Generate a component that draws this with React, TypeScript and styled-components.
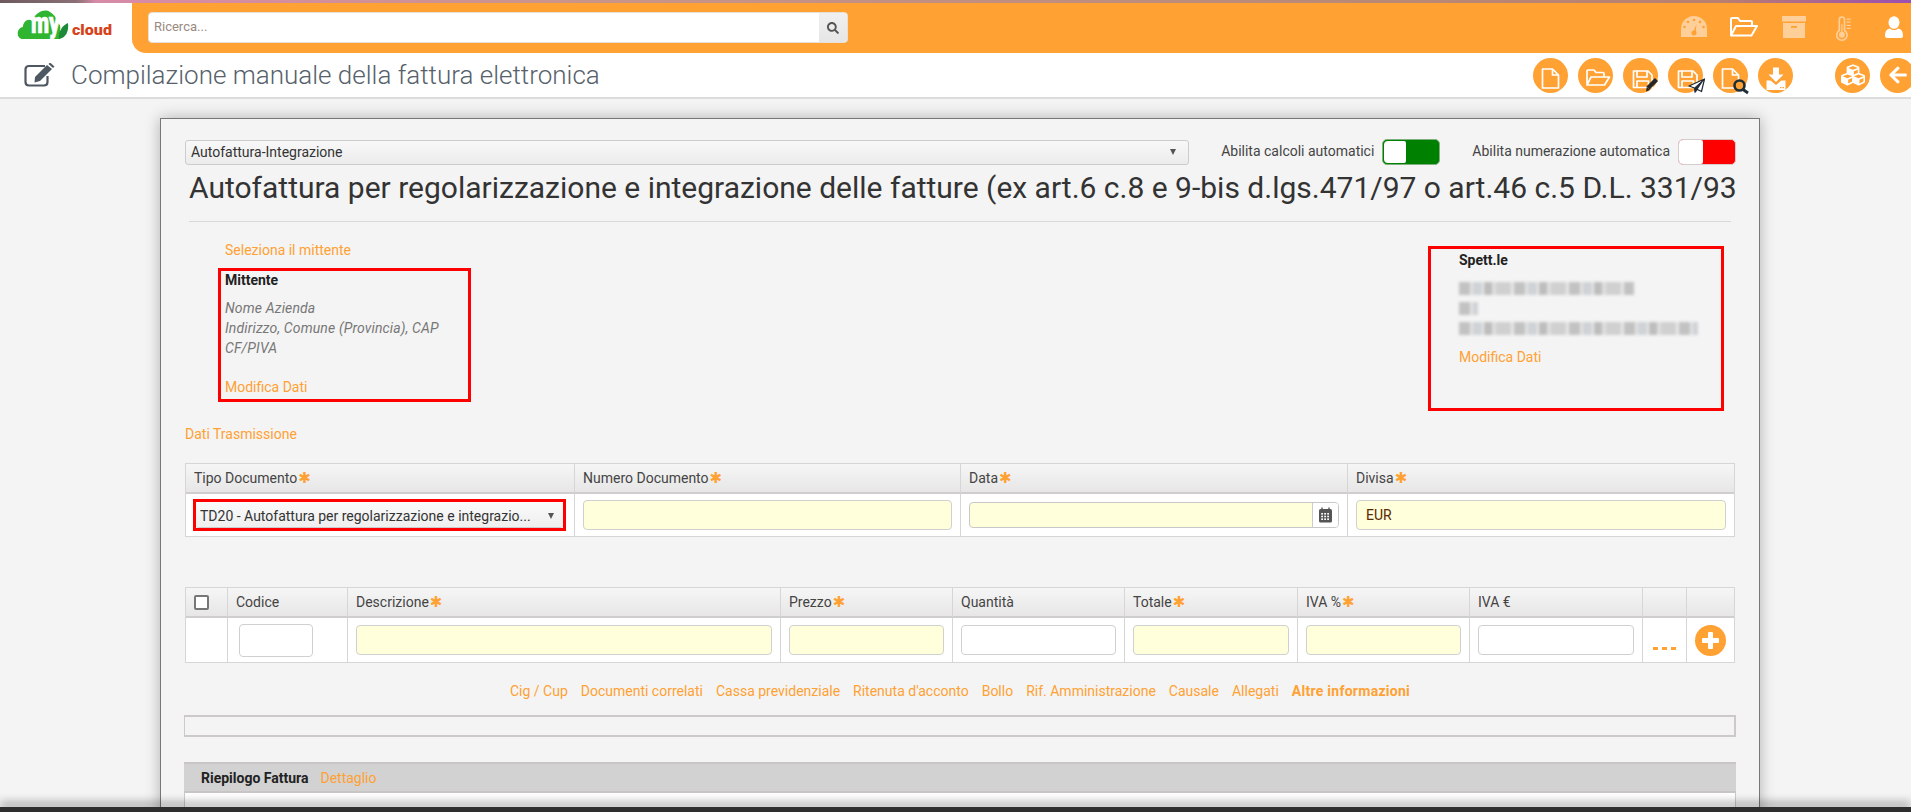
import React from "react";
import styled, { createGlobalStyle } from "styled-components";
import { FaCubes, FaArrowLeft, FaSearch } from "react-icons/fa";

const ORANGE = "#ffa133";

const Global = createGlobalStyle`
  html, body { margin: 0; padding: 0; background: #f4f4f4; }
  body { font-family: Roboto, "Liberation Sans", sans-serif; font-size: 14px; color: #333; overflow: hidden; }
  * { box-sizing: border-box; }
`;

const Page = styled.div`
  height: 812px;
  overflow: hidden;
  background: #f4f4f4;
`;
const TopLine = styled.div`
  height: 3px;
  background: linear-gradient(90deg, #6d5a5e 0, #8a7075 4%, #d88aa8 5%, #c9958a 30%, #b98a78 70%, #b9806f 90%, #9b4fb0 100%);
`;
const Header = styled.header`
  display: flex;
  height: 50px;
  background: #fff;
`;
const LogoCell = styled.div`
  width: 132px;
  flex: none;
  padding: 7px 0 0 17px;
  svg { overflow: visible; }
`;
const HeaderBar = styled.div`
  flex: 1;
  display: flex;
  align-items: flex-start;
  background: ${ORANGE};
  border-bottom-left-radius: 14px;
  padding: 9px 2px 0 16px;
`;
const Search = styled.div`
  width: 700px;
  height: 31px;
  display: flex;
  background: #fff;
  border: 1px solid #e8e0d6;
  border-radius: 4px;
  overflow: hidden;
`;
const SearchText = styled.div`
  flex: 1;
  padding-left: 5px;
  line-height: 28px;
  font-size: 13px;
  color: #9a8a80;
`;
const SearchBtn = styled.div`
  width: 28px;
  display: flex;
  align-items: center;
  justify-content: center;
  background: linear-gradient(#f0f0f0, #e6e6e6);
  color: #555;
  font-size: 12px;
`;
const HeaderIcons = styled.div`
  margin-left: auto;
  display: flex;
  gap: 20px;
  padding-top: 4px;
`;
const HeaderIconBox = styled.div`
  width: 30px;
  height: 26px;
  display: flex;
  justify-content: center;
`;
const TitleRow = styled.div`
  height: 46px;
  display: flex;
  align-items: center;
  background: #fff;
  border-bottom: 2px solid #dcdcdc;
  padding-left: 24px;
`;
const PageTitle = styled.div`
  margin-left: 16px;
  font-size: 26px;
  font-weight: 300;
  color: #56616b;
  white-space: nowrap;
`;
const Toolbar = styled.div`
  margin-left: auto;
  margin-right: -4px;
  display: flex;
  align-items: center;
  gap: 10px;
`;
const RoundBtn = styled.div<{ $gap?: boolean }>`
  width: 35px;
  height: 35px;
  flex: none;
  border-radius: 50%;
  background: ${ORANGE};
  color: #fff;
  display: flex;
  align-items: center;
  justify-content: center;
  margin-left: ${(p) => (p.$gap ? "32px" : "0")};
  svg { overflow: visible; }
`;
const Card = styled.main`
  margin: 19px 0 0 160px;
  width: 1600px;
  height: 760px;
  padding: 20px 24px;
  background: #f4f4f4;
  border: 1px solid #777;
  box-shadow: 0 0 14px rgba(0, 0, 0, 0.28);
`;
const TopControls = styled.div`
  display: flex;
  align-items: center;
  height: 26px;
  margin-right: -1px;
`;
const Select = styled.div<{ $w?: number }>`
  height: 25px;
  width: ${(p) => (p.$w ? p.$w + "px" : "100%")};
  display: flex;
  align-items: center;
  justify-content: space-between;
  padding: 0 12px 0 5px;
  border: 1px solid #ccc;
  border-radius: 3px;
  background: linear-gradient(#f8f8f8, #ececec);
  font-size: 14px;
  color: #333;
`;
const Caret = styled.span`
  width: 0;
  height: 0;
  border-left: 3.5px solid transparent;
  border-right: 3.5px solid transparent;
  border-top: 6px solid #555;
`;
const ToggleLabel = styled.span<{ $first?: boolean }>`
  margin-left: ${(p) => (p.$first ? "auto" : "32px")};
  margin-right: 8px;
  font-size: 14px;
  color: #444;
  white-space: nowrap;
  position: relative;
  top: -1px;
`;
const Toggle = styled.div<{ $color: string; $knob: number; $inset: number; $edge: string }>`
  width: 58px;
  height: 26px;
  flex: none;
  padding: ${(p) => p.$inset}px;
  border-radius: 5px;
  background: ${(p) => p.$color};
  border: 1px solid ${(p) => p.$edge};
  display: flex;
  &::before {
    content: "";
    width: ${(p) => p.$knob}px;
    background: #fff;
    border-radius: 4px 2px 2px 4px;
  }
`;
const BigTitle = styled.h1`
  margin: 2px 0 0;
  padding: 0 0 0 4px;
  height: 42px;
  font-size: 30px;
  font-weight: 400;
  line-height: 42px;
  color: #333;
  white-space: nowrap;
`;
const Rule = styled.div`
  height: 1px;
  margin: 12px 4px 0 4px;
  background: #d9d9d9;
`;
const Parties = styled.div`
  display: flex;
  justify-content: space-between;
  align-items: flex-start;
  padding: 18px 11px 0 33px;
`;
const LinkText = styled.div`
  color: ${ORANGE};
  font-size: 14px;
  line-height: 20px;
`;
const SenderLink = styled(LinkText)`
  margin: 0 0 8px 7px;
`;
const RedBox = styled.section<{ $w: number; $h: number; $pl: number; $pt: number }>`
  width: ${(p) => p.$w}px;
  height: ${(p) => p.$h}px;
  border: 3px solid #f00;
  padding: ${(p) => p.$pt}px 0 0 ${(p) => p.$pl}px;
`;
const RecipientBox = styled(RedBox)`
  margin-top: 6px;
`;
const PartyHead = styled.div`
  font-weight: 700;
  font-size: 14px;
  line-height: 18px;
  color: #222;
`;
const PartyLines = styled.div`
  margin-top: 9px;
`;
const PlaceholderLine = styled.div`
  font-style: italic;
  font-size: 14px;
  line-height: 20px;
  letter-spacing: 0.14px;
  color: #777;
`;
const BlurRow = styled.div`
  height: 20px;
  display: flex;
  align-items: center;
`;
const BlurBar = styled.div<{ $w: number }>`
  width: ${(p) => p.$w}px;
  height: 13px;
  filter: blur(1.8px);
  background: repeating-linear-gradient(90deg, #c2c2c2 0 11px, #e2e2e2 11px 14px, #cfd2d6 14px 23px, #ececec 23px 25px, #bdbdbd 25px 33px, #dedede 33px 37px, #d0d0d0 37px 52px, #e8e8e8 52px 55px);
`;
const AfterGap = styled(LinkText)<{ $mt: number }>`
  margin-top: ${(p) => p.$mt}px;
`;
const SectionLink = styled(LinkText)`
  margin-top: 13px;
`;
const Grid = styled.div<{ $cols: string; $mt: number; $row: number }>`
  display: grid;
  grid-template-columns: ${(p) => p.$cols};
  grid-template-rows: 30px ${(p) => p.$row}px;
  margin-top: ${(p) => p.$mt}px;
  border: 1px solid #d6d6d6;
`;
const HeadCell = styled.div`
  display: flex;
  align-items: center;
  padding-left: 8px;
  font-size: 14px;
  color: #444;
  background: linear-gradient(#f6f6f6, #e8e6e6);
  border-bottom: 2px solid #cfcdcd;
  border-left: 1px solid #d6d6d6;
  &:first-child { border-left: 0; }
`;
const Star = styled.span`
  margin-left: 1px;
  font-family: "DejaVu Sans", sans-serif;
  font-size: 15px;
  line-height: 1;
  color: ${ORANGE};
`;
const BodyCell = styled.div`
  display: flex;
  align-items: center;
  padding: 0 8px;
  background: #fff;
  border-left: 1px solid #d6d6d6;
`;
const FirstBodyCell = styled(BodyCell)`
  border-left: 0;
`;
const CenterCell = styled(BodyCell)`
  justify-content: center;
  padding: 0;
`;
const Input = styled.div<{ $req?: boolean; $w?: number; $h?: number; $ml?: number }>`
  width: ${(p) => (p.$w ? p.$w + "px" : "100%")};
  height: ${(p) => p.$h ?? 30}px;
  margin-left: ${(p) => p.$ml ?? 0}px;
  padding-left: 9px;
  line-height: 28px;
  font-size: 14px;
  color: #5a2a00;
  background: ${(p) => (p.$req ? "#ffffdc" : "#fff")};
  border: 1px solid #d0d0d0;
  border-radius: 4px;
`;
const DateField = styled.div`
  width: 100%;
  height: 26px;
  display: flex;
  background: #ffffdc;
  border: 1px solid #c8c8c8;
  border-radius: 4px;
  overflow: hidden;
`;
const DateSpacer = styled.div`
  flex: 1;
`;
const DateBtn = styled.div`
  width: 26px;
  display: flex;
  align-items: center;
  justify-content: center;
  background: #fff;
  border-left: 1px solid #ccc;
`;
const RedSelectWrap = styled.div`
  width: 377px;
  height: 32px;
  margin-left: -1px;
  border: 3px solid #f00;
`;
const SmallSelect = styled(Select)`
  height: 26px;
  border-top: 0;
  border-left: 0;
  border-right: 0;
  padding: 3px 9px 0 4px;
  background: linear-gradient(#fafafa, #efefef);
`;
const Checkbox = styled.div`
  width: 15px;
  height: 15px;
  background: #fff;
  border: 2px solid #777;
  border-radius: 2px;
`;
const Dots = styled.div`
  display: flex;
  gap: 4px;
  margin-top: 16px;
`;
const Dot = styled.span`
  width: 5px;
  height: 3px;
  background: ${ORANGE};
`;
const PlusBtn = styled.div`
  width: 31px;
  height: 31px;
  border-radius: 50%;
  background: ${ORANGE};
  position: relative;
  &::before, &::after {
    content: "";
    position: absolute;
    background: #fff;
    border-radius: 1px;
  }
  &::before { left: 7px; right: 7px; top: 13px; height: 5px; }
  &::after { top: 7px; bottom: 7px; left: 13px; width: 5px; }
`;
const Tabs = styled.nav`
  display: flex;
  justify-content: center;
  gap: 13px;
  margin-top: 18px;
  height: 20px;
`;
const Tab = styled(LinkText)<{ $active?: boolean }>`
  font-weight: ${(p) => (p.$active ? 700 : 400)};
  letter-spacing: ${(p) => (p.$active ? "0.27px" : "0")};
`;
const EmptyBox = styled.div`
  height: 22px;
  margin: 14px -1px 0 -1px;
  border: 2px solid #cdc9c9;
  border-width: 2px 2px 2px 1px;
`;
const SummaryBar = styled.div`
  height: 31px;
  margin: 25px -1px 0 -1px;
  display: flex;
  align-items: center;
  gap: 12px;
  padding-left: 17px;
  background: #d2d2d2;
  border-top: 2px solid #c9c5c5;
  border-bottom: 2px solid #c9c5c5;
  font-size: 14px;
`;
const SummaryTitle = styled.strong`
  color: #222;
`;
const SummaryPanel = styled.div`
  height: 40px;
  margin: 0 -1px;
  background: #fff;
  border: 1px solid #ccc;
  border-top: 0;
`;
const BottomBar = styled.div`
  position: fixed;
  left: 0;
  right: 0;
  bottom: 0;
  height: 5px;
  background: #2e2e2e;
  box-shadow: 0 -4px 10px rgba(0, 0, 0, 0.45);
`;

const Logo = () => (
  <svg width="100" height="34" viewBox="0 0 100 34">
    <path d="M6 29 C-1 29 -1 18 6 17 C6 11 12 8 15 11 C18 3 27 -2 33 2 C38 5 40 9 39 12 C43 13 44 17 43 20 L43 29 Z" fill="#2fb52f" />
    <text x="14" y="23" fontFamily="Roboto, sans-serif" fontWeight="900" fontSize="30" fill="#fff" stroke="#fff" strokeWidth="0.7" textLength="29" lengthAdjust="spacingAndGlyphs">my</text>
    <path d="M42 29 C41 21 46 15 51 13 C52 21 49 28 42 29 Z" fill="#1d8a3a" />
    <text x="55" y="25" fontFamily="Roboto, sans-serif" fontWeight="900" fontSize="15" fill="#d6431a" textLength="40" lengthAdjust="spacingAndGlyphs">cloud</text>
  </svg>
);

const IGauge = () => (
  <svg width="26" height="22" viewBox="0 0 26 22">
    <path d="M0 21 V13 A13 13 0 0 1 26 13 V21 Z" fill="#ffcf99" />
    <g fill={ORANGE}>
      <circle cx="13" cy="4" r="1.3" /><circle cx="7" cy="6" r="1.3" /><circle cx="19" cy="6" r="1.3" />
      <circle cx="3.5" cy="11" r="1.3" /><circle cx="22.5" cy="11" r="1.3" /><circle cx="13" cy="17" r="2.5" />
      <path d="M12 17 L15.5 8 L14.5 17 Z" />
    </g>
  </svg>
);
const IFolderWhite = () => (
  <svg width="28" height="22" viewBox="0 0 28 22" fill="none" stroke="#fff" strokeWidth="2" strokeLinejoin="round">
    <path d="M1 19 V3 Q1 2 2 2 H8 L10 5 H21 Q22 5 22 6 V9" />
    <path d="M1 19.5 L6 10 H27 L21.5 19.5 Z" />
  </svg>
);
const IArchive = () => (
  <svg width="24" height="23" viewBox="0 0 24 23">
    <path d="M0 0 H24 V5.5 H0 Z M1 7 H23 V22 H1 Z" fill="#ffcf99" />
    <rect x="9" y="10" width="6" height="1.8" fill={ORANGE} />
  </svg>
);
const IThermo = () => (
  <svg width="17" height="26" viewBox="0 0 16 25" fill="none" stroke="#ffcf99" strokeWidth="1.6">
    <path d="M3 14 V3.5 A2.5 2.5 0 0 1 8 3.5 V14 A5 5 0 1 1 3 14 Z" />
    <circle cx="5.5" cy="18" r="2" fill="#ffcf99" />
    <path d="M5.5 17 V8 M10 3 H14 M10 6 H14 M10 9 H14 M10 12 H14" strokeWidth="1.2" />
  </svg>
);
const IUser = () => (
  <svg width="18" height="23" viewBox="0 0 18 23" fill="#fff">
    <ellipse cx="9" cy="6.5" rx="5.5" ry="6.3" />
    <path d="M0 20 C0 15 2 13 5 12.5 C7 14.5 11 14.5 13 12.5 C16 13 18 15 18 20 Q18 22 16 22 H2 Q0 22 0 20 Z" />
  </svg>
);

const Stroke = { fill: "none", stroke: "#fff", strokeWidth: 1.7, strokeLinejoin: "round" as const };
const PagePath = () => <path {...Stroke} d="M9.5 11 H19.5 L25.5 17 V30 H9.5 Z M19.5 11 V17 H25.5" />;
const FloppyPath = () => (
  <path {...Stroke} d="M10.5 13 H25 L29 17 V29.5 H10.5 Z M14 13 V19 H24 V13 M14 29.5 V23 H25.5 V29.5" />
);
const Btn35 = ({ children }: { children: React.ReactNode }) => (
  <svg width="35" height="35" viewBox="0 0 35 35">{children}</svg>
);

const Ast = () => <Star>✱</Star>;

const cols1 = "388px 386px 387px 1fr";
const cols2 = "41px 120px 433px 172px 172px 173px 172px 173px 44px 1fr";

export default function App() {
  return (
    <Page>
      <Global />
      <TopLine />
      <Header>
        <LogoCell><Logo /></LogoCell>
        <HeaderBar>
          <Search>
            <SearchText>Ricerca...</SearchText>
            <SearchBtn><FaSearch /></SearchBtn>
          </Search>
          <HeaderIcons>
            <HeaderIconBox><IGauge /></HeaderIconBox>
            <HeaderIconBox><IFolderWhite /></HeaderIconBox>
            <HeaderIconBox><IArchive /></HeaderIconBox>
            <HeaderIconBox><IThermo /></HeaderIconBox>
            <HeaderIconBox><IUser /></HeaderIconBox>
          </HeaderIcons>
        </HeaderBar>
      </Header>
      <TitleRow>
        <svg width="31" height="24" viewBox="0 0 31 24" fill="none">
          <path d="M21 3 H5 Q1.5 3 1.5 6.5 V19 Q1.5 22.5 5 22.5 H20 Q23.5 22.5 23.5 19 V13" stroke="#4e5862" strokeWidth="2.2" />
          <path d="M11 14 L23 2 L28 6 L16 18 L10.5 19.5 Z" fill="#4e5862" />
          <path d="M24.5 1 L26 -0.5 L30.5 3.5 L29 5 Z" fill="#4e5862" />
        </svg>
        <PageTitle>Compilazione manuale della fattura elettronica</PageTitle>
        <Toolbar>
          <RoundBtn><Btn35><PagePath /></Btn35></RoundBtn>
          <RoundBtn>
            <Btn35>
              <path {...Stroke} d="M9 26.5 V13 Q9 12 10 12 H16 L18 14.5 H25 Q26 14.5 26 15.5 V18.5 M9 27 L13 19 H31.5 L26.5 27 Z" />
            </Btn35>
          </RoundBtn>
          <RoundBtn>
            <Btn35>
              <FloppyPath />
              <path d="M25 30 L33.5 21.5" stroke="#262626" strokeWidth="4.5" />
              <path d="M23 33.5 L23.8 28.8 L27 32 Z" fill="#262626" />
            </Btn35>
          </RoundBtn>
          <RoundBtn>
            <Btn35>
              <FloppyPath />
              <path d="M36.5 21 L21 28 L26.5 30 L33.5 33.5 Z" fill="#fff" stroke="#1f2a36" strokeWidth="1.2" strokeLinejoin="round" />
              <path d="M36.5 21 L26.5 30 L27 34.5 L29.5 31.5" fill="#1f2a36" stroke="#1f2a36" strokeWidth="1" strokeLinejoin="round" />
            </Btn35>
          </RoundBtn>
          <RoundBtn>
            <Btn35>
              <PagePath />
              <circle cx="26.5" cy="27.5" r="5" fill={ORANGE} stroke="#1f2f38" strokeWidth="2.6" />
              <path d="M30 31.5 L35 35" stroke="#1f2f38" strokeWidth="2.8" />
            </Btn35>
          </RoundBtn>
          <RoundBtn>
            <Btn35>
              <path d="M15 9.5 H21 V16.5 H25.5 L18 24 L10.5 16.5 H15 Z" fill="#fff" />
              <path d="M8.5 22.5 H12.5 L18 27 L23.5 22.5 H27.5 V32 H8.5 Z" fill="#fff" />
              <rect x="22" y="29" width="1.5" height="1.2" fill={ORANGE} />
              <rect x="24.5" y="29" width="1.5" height="1.2" fill={ORANGE} />
            </Btn35>
          </RoundBtn>
          <RoundBtn $gap><FaCubes size={24} /></RoundBtn>
          <RoundBtn><FaArrowLeft size={20} /></RoundBtn>
        </Toolbar>
      </TitleRow>
      <Card>
        <TopControls>
          <Select $w={1004}>Autofattura-Integrazione<Caret /></Select>
          <ToggleLabel $first>Abilita calcoli automatici</ToggleLabel>
          <Toggle $color="#008000" $knob={22} $inset={1} $edge="#7fb07f" />
          <ToggleLabel>Abilita numerazione automatica</ToggleLabel>
          <Toggle $color="#ff0000" $knob={24} $inset={0} $edge="#d6cccc" />
        </TopControls>
        <BigTitle>Autofattura per regolarizzazione e integrazione delle fatture (ex art.6 c.8 e 9-bis d.lgs.471/97 o art.46 c.5 D.L. 331/93</BigTitle>
        <Rule />
        <Parties>
          <div>
            <SenderLink>Seleziona il mittente</SenderLink>
            <RedBox $w={253} $h={134} $pl={4} $pt={0}>
              <PartyHead>Mittente</PartyHead>
              <PartyLines>
                <PlaceholderLine>Nome Azienda</PlaceholderLine>
                <PlaceholderLine>Indirizzo, Comune (Provincia), CAP</PlaceholderLine>
                <PlaceholderLine>CF/PIVA</PlaceholderLine>
              </PartyLines>
              <AfterGap $mt={19}>Modifica Dati</AfterGap>
            </RedBox>
          </div>
          <RecipientBox $w={296} $h={165} $pl={28} $pt={2}>
            <PartyHead>Spett.le</PartyHead>
            <PartyLines>
              <BlurRow><BlurBar $w={175} /></BlurRow>
              <BlurRow><BlurBar $w={19} /></BlurRow>
              <BlurRow><BlurBar $w={239} /></BlurRow>
            </PartyLines>
            <AfterGap $mt={9}>Modifica Dati</AfterGap>
          </RecipientBox>
        </Parties>
        <SectionLink>Dati Trasmissione</SectionLink>
        <Grid $cols={cols1} $mt={19} $row={42}>
          <HeadCell>Tipo Documento<Ast /></HeadCell>
          <HeadCell>Numero Documento<Ast /></HeadCell>
          <HeadCell>Data<Ast /></HeadCell>
          <HeadCell>Divisa<Ast /></HeadCell>
          <FirstBodyCell>
            <RedSelectWrap>
              <SmallSelect>TD20 - Autofattura per regolarizzazione e integrazio...<Caret /></SmallSelect>
            </RedSelectWrap>
          </FirstBodyCell>
          <BodyCell><Input $req /></BodyCell>
          <BodyCell>
            <DateField>
              <DateSpacer />
              <DateBtn>
                <svg width="15" height="16" viewBox="0 0 15 16">
                  <rect x="1" y="2" width="13" height="13.5" rx="1.5" fill="#555" />
                  <path d="M4 0.5 V3 M11 0.5 V3" stroke="#555" strokeWidth="1.4" />
                  <g fill="#fff">
                    {[6, 8.7, 11.4].map((y) => [3.2, 6.2, 9.2].map((x) => <rect key={x + "-" + y} x={x} y={y} width="1.8" height="1.6" />))}
                  </g>
                </svg>
              </DateBtn>
            </DateField>
          </BodyCell>
          <BodyCell><Input $req>EUR</Input></BodyCell>
        </Grid>
        <Grid $cols={cols2} $mt={50} $row={44}>
          <HeadCell><Checkbox /></HeadCell>
          <HeadCell>Codice</HeadCell>
          <HeadCell>Descrizione<Ast /></HeadCell>
          <HeadCell>Prezzo<Ast /></HeadCell>
          <HeadCell>Quantità</HeadCell>
          <HeadCell>Totale<Ast /></HeadCell>
          <HeadCell>IVA %<Ast /></HeadCell>
          <HeadCell>IVA €</HeadCell>
          <HeadCell />
          <HeadCell />
          <FirstBodyCell />
          <BodyCell><Input $w={74} $h={33} $ml={3} /></BodyCell>
          <BodyCell><Input $req /></BodyCell>
          <BodyCell><Input $req /></BodyCell>
          <BodyCell><Input /></BodyCell>
          <BodyCell><Input $req /></BodyCell>
          <BodyCell><Input $req /></BodyCell>
          <BodyCell><Input /></BodyCell>
          <CenterCell><Dots><Dot /><Dot /><Dot /></Dots></CenterCell>
          <CenterCell><PlusBtn /></CenterCell>
        </Grid>
        <Tabs>
          <Tab>Cig / Cup</Tab>
          <Tab>Documenti correlati</Tab>
          <Tab>Cassa previdenziale</Tab>
          <Tab>Ritenuta d'acconto</Tab>
          <Tab>Bollo</Tab>
          <Tab>Rif. Amministrazione</Tab>
          <Tab>Causale</Tab>
          <Tab>Allegati</Tab>
          <Tab $active>Altre informazioni</Tab>
        </Tabs>
        <EmptyBox />
        <SummaryBar><SummaryTitle>Riepilogo Fattura</SummaryTitle><LinkText>Dettaglio</LinkText></SummaryBar>
        <SummaryPanel />
      </Card>
      <BottomBar />
    </Page>
  );
}
